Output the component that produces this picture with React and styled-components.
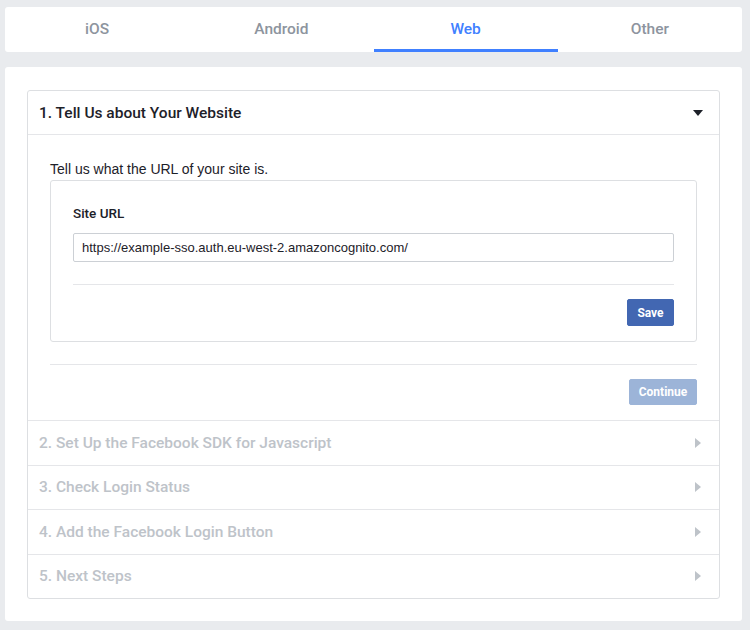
import React, { useState } from "react";
import styled, { createGlobalStyle } from "styled-components";

const GlobalStyle = createGlobalStyle`
  html, body {
    margin: 0;
    padding: 0;
    background: #e9ebee;
    font-family: "Liberation Sans", Arial, Helvetica, sans-serif;
    color: #1d2129;
  }
  * { box-sizing: border-box; }
`;

// headings in the shot use a semibold face, Roboto 500 is the closest installed
const strong = `font-family: Roboto, "Liberation Sans", Arial, sans-serif; font-weight: 500;`;

const tabs = ["iOS", "Android", "Web", "Other"];
const steps = [
  "2. Set Up the Facebook SDK for Javascript",
  "3. Check Login Status",
  "4. Add the Facebook Login Button",
  "5. Next Steps",
];

const CaretDown = () => (
  <svg width="10" height="6" viewBox="0 0 10 6">
    <path d="M0 0 L10 0 L5 6 Z" fill="#1d2129" />
  </svg>
);

const CaretRight = () => (
  <svg width="6" height="10" viewBox="0 0 6 10">
    <path d="M0 0 L6 5 L0 10 Z" fill="#bec3c9" />
  </svg>
);

const App = () => {
  const [active, setActive] = useState("Web");
  const [url, setUrl] = useState(
    "https://example-sso.auth.eu-west-2.amazoncognito.com/"
  );

  return (
    <Page>
      <GlobalStyle />
      <TabBar>
        {tabs.map((t) => (
          <Tab key={t} $active={t === active} onClick={() => setActive(t)}>
            {t}
          </Tab>
        ))}
      </TabBar>

      <Card>
        <Accordion>
          <Header>
            <HeaderTitle>1. Tell Us about Your Website</HeaderTitle>
            <CaretDown />
          </Header>
          <Body>
            <Intro>Tell us what the URL of your site is.</Intro>
            <Panel>
              <FieldLabel>Site URL</FieldLabel>
              <UrlInput value={url} onChange={(e) => setUrl(e.target.value)} />
              <Divider />
              <ButtonRow>
                <SaveButton>Save</SaveButton>
              </ButtonRow>
            </Panel>
            <Divider />
            <ButtonRow>
              <ContinueButton disabled>Continue</ContinueButton>
            </ButtonRow>
          </Body>
          {steps.map((s) => (
            <Step key={s}>
              <StepTitle>{s}</StepTitle>
              <CaretRight />
            </Step>
          ))}
        </Accordion>
      </Card>
    </Page>
  );
};

const Page = styled.div`
  width: 750px;
  height: 630px;
  padding: 7px 8px 0 5px;
  display: flex;
  flex-direction: column;
  gap: 15px;
`;

const TabBar = styled.div`
  height: 45px;
  background: #fff;
  border-radius: 3px;
  display: grid;
  grid-template-columns: repeat(4, 1fr);
  overflow: hidden;
`;

const Tab = styled.div`
  display: flex;
  align-items: center;
  justify-content: center;
  ${strong}
  font-size: 15.5px;
  color: ${(p) => (p.$active ? "#4080ff" : "#8d949e")};
  border-bottom: 3px solid ${(p) => (p.$active ? "#4080ff" : "transparent")};
  padding-top: 1px;
  cursor: pointer;
`;

const Card = styled.div`
  height: 554px;
  background: #fff;
  border-radius: 3px;
  padding: 23px 22px 0 22px;
`;

const Accordion = styled.div`
  border: 1px solid #dddfe2;
  border-radius: 3px;
`;

const Header = styled.div`
  height: 44px;
  padding: 0 16px 0 11px;
  display: flex;
  align-items: center;
  justify-content: space-between;
  border-bottom: 1px solid #e5e6e9;
`;

const HeaderTitle = styled.div`
  ${strong}
  font-size: 15.5px;
  color: #1d2129;
`;

const Body = styled.div`
  padding: 26px 22px 15px 22px;
  border-bottom: 1px solid #e5e6e9;
`;

const Intro = styled.div`
  font-size: 14px;
  color: #1d2129;
  margin-bottom: 3px;
`;

const Panel = styled.div`
  border: 1px solid #dddfe2;
  border-radius: 3px;
  padding: 25px 22px 15px 22px;
  margin-bottom: 22px;
`;

const FieldLabel = styled.div`
  ${strong}
  font-size: 13.5px;
  line-height: 15px;
  color: #1d2129;
  margin-bottom: 12px;
`;

const UrlInput = styled.input`
  display: block;
  width: 100%;
  height: 29px;
  border: 1px solid #ccd0d5;
  border-radius: 2px;
  padding: 0 8px;
  font-family: inherit;
  font-size: 13px;
  color: #1d2129;
  outline: none;
  margin-bottom: 22px;
`;

const Divider = styled.div`
  height: 1px;
  background: #e5e6e9;
  margin-bottom: 14px;
`;

const ButtonRow = styled.div`
  display: flex;
  justify-content: flex-end;
`;

const SaveButton = styled.button`
  height: 27px;
  width: 47px;
  padding: 0;
  background: #4267b2;
  border: 1px solid #4267b2;
  border-radius: 2px;
  color: #fff;
  ${strong}
  font-weight: bold;
  font-size: 12px;
  cursor: pointer;
`;

const ContinueButton = styled.button`
  height: 26px;
  width: 68px;
  padding: 0;
  background: #9cb4d8;
  border: 1px solid #9cb4d8;
  border-radius: 2px;
  color: #fff;
  ${strong}
  font-weight: bold;
  font-size: 12px;
`;

const Step = styled.div`
  height: 44.5px;
  padding: 0 18px 0 11px;
  display: flex;
  align-items: center;
  justify-content: space-between;
  border-bottom: 1px solid #e5e6e9;
  &:last-child {
    height: 43.5px;
    border-bottom: none;
  }
`;

const StepTitle = styled.div`
  ${strong}
  font-size: 15.5px;
  color: #bec3c9;
`;

export default App;
